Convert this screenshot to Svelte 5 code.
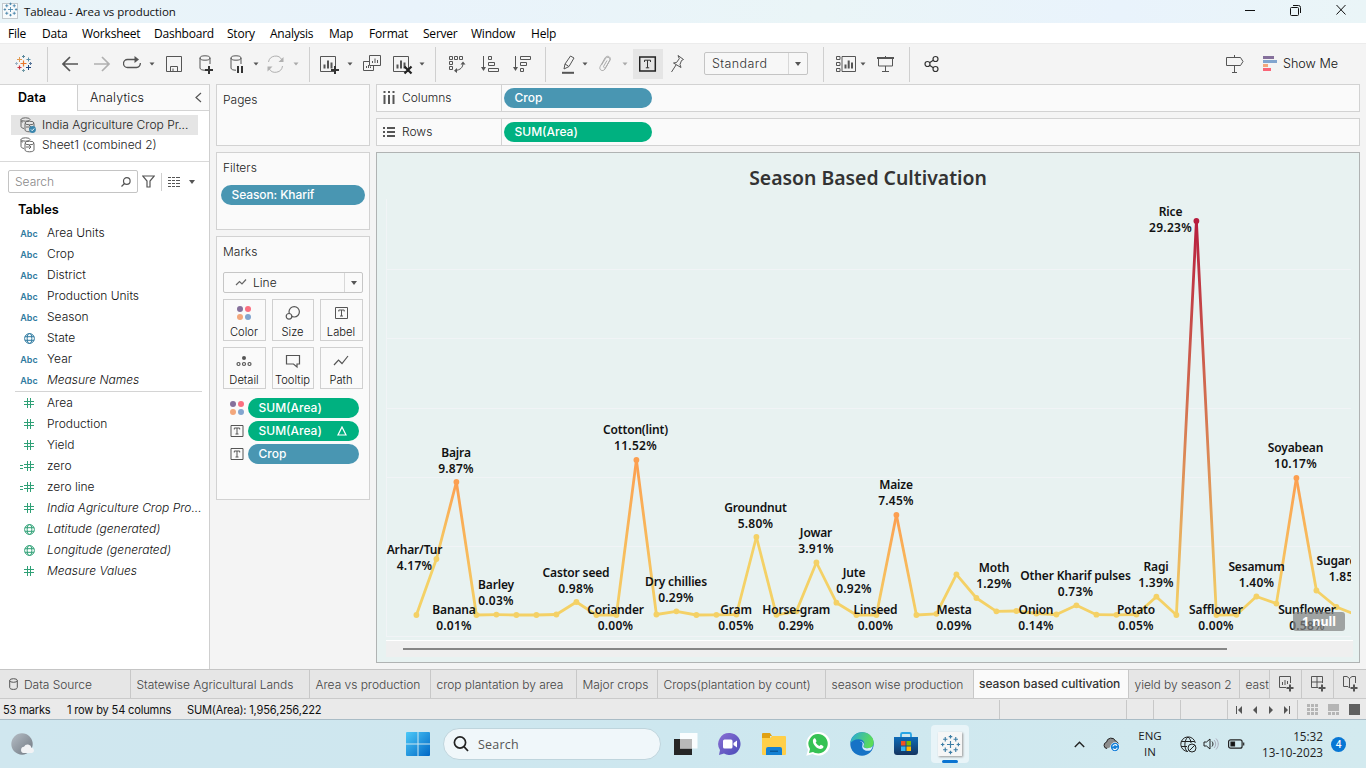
<script>
  const menus = [
    ['File', 34], ['Data', 40], ['Worksheet', 72], ['Dashboard', 73], ['Story', 43], ['Analysis', 59],
    ['Map', 40], ['Format', 54], ['Server', 48], ['Window', 60], ['Help', 40]
  ];

  const cross = (x, y, s, c, w = 1.2) =>
    `<path d="M${x - s} ${y}H${x + s}M${x} ${y - s}V${y + s}" stroke="${c}" stroke-width="${w}" fill="none"/>`;
  const plus = (x, y) => `<path d="M${x - 4} ${y}h8M${x} ${y - 4}v8" stroke="#333" stroke-width="2" fill="none"/>`;
  const barsBox = (x, y) =>
    `<path d="M${x} ${y}h15v15h-15z"/><path d="M${x + 4} ${y + 12}v-4M${x + 7.5} ${y + 12}v-8M${x + 11} ${y + 12}v-6" stroke-width="2"/>`;
  const db = '<ellipse cx="6" cy="6" rx="5" ry="2.2"/><path d="M1 6v10c0 1.4 2 2.2 5 2.2M11 6v6"/>';
  const caret = '<path d="M.5 10.5h5l-2.5 3z" fill="#555" stroke="none"/>';
  const boxT = '<path d="M.5.5h12v11H.5z"/><path d="M3.8 4.5V3h5.4v1.5M6.500 3v6M5 9h3" />';

  const icons = {
    logo:
      cross(8.500, 11.500, 3, '#e8762c', 1.2) + cross(4.500, 7.500, 2.500, '#e09a52', 1) + cross(13.5, 7.500, 2, '#5b8fa8', 1) +
      cross(4.500, 15.500, 2, '#c8333f', 1.2) + cross(13.5, 15.500, 2.500, '#1f457e', 1) +
      cross(8.500, 4.500, 1.500, '#5b879b', 1) + cross(8.500, 18.5, 1.500, '#7099a6', 1) + cross(1.500, 11.500, 1.500, '#9db3c4', 1) + cross(15.500, 11.500, 1.500, '#59779b', 1),
    back: '<path d="M16 12H1.500M8 5l-7 7 7 7" stroke-width="1.7"/>',
    forward: '<path d="M0 12h14.500M8 5l7 7-7 7" stroke-width="1.7" stroke="#b0b0b0"/>',
    loop: '<path d="M8 15.500H4.500a4 4 0 0 1 0-8H12M6 15.500h7.500a4 4 0 0 0 3.800-4.500" stroke-width="1.300"/><path d="M11.500 4v7L16 7.500z" fill="#555" stroke="none"/>',
    caret,
    caretOff: caret.replaceAll('#555', '#aaa'),
    save: '<path d="M.5 4.500h15v15H.5zM4.500 19.500v-5h7v5M7 19v-2.500" />',
    dbPlus: db + plus(10, 18),
    dbPause: db + '<path d="M8 14v7M12 14v7" stroke="#333" stroke-width="2"/>',
    refresh: '<g stroke="#b0b0b0"><path d="M1.500 10A7.200 7.200 0 0 1 15 8M15.500 14A7.200 7.200 0 0 1 2 16.500"/><path d="M16.500 5v5h-5z M.5 19.500v-5h5z" fill="#b0b0b0" stroke="none"/></g>',
    newSheet: barsBox(.5, 4.500) + plus(15, 18),
    duplicate: '<path d="M6.500 3.500h11v10h-11zM6 9.500H.5v9h10V14"/><path d="M9.500 11V9M12 11V6.500M14.500 11V8M3.500 16v-2M5.500 16v-3M7.500 16v-1.500" />',
    clearSheet: barsBox(.5, 4.500) + '<path d="M11.500 14.500l7 7m0-7l-7 7" stroke="#222" stroke-width="2.200"/>',
    swap: '<path d="M1.500 4.500h3v3h-3zM6.500 4.500h3v3h-3zM11.500 4.500h3v3h-3zM1.500 9.500h3v3h-3zM1.500 14.500h3v3h-3z"/><path d="M15 11c0 4.500-2.500 7-8 7.500"/><path d="M12.500 12.500l2.500-3 2.500 3zM9 16l-3 2.700 3 2.300z" fill="#555" stroke="none"/>',
    sortAsc: '<path d="M2.500 4v13M7.500 4.500h3v3h-3zM7.500 10.500h6v3h-6zM7.500 16.500h10v3h-10z"/><path d="M0 15h5l-2.500 4z" fill="#555" stroke="none"/>',
    sortDesc: '<path d="M2.500 4v13M7.500 4.500h10v3h-10zM7.500 10.500h6v3h-6zM7.500 16.500h3v3h-3z"/><path d="M0 15h5l-2.500 4z" fill="#555" stroke="none"/>',
    pen: '<path d="M2 17l1-5 5.500-8 3.500 2-5 8.500zM3 12l3.500 2.200"/><path d="M0 20.800h12" stroke-width="2"/>',
    clip: '<path d="M3.500 13l4-6.500c2-2.500 5.500-.5 4.200 2L7 17c-2 3.200-6.500 1-4.800-2.500L7 6c2-3.500 6.500-1 5 2L8 15c-1 1.800-3 .5-2.300-.8L9 8.500" stroke="#aaa"/>',
    textBox: '<path d="M.7 5h15.600v14H.7z" stroke="#222" stroke-width="1.500"/><path d="M5.500 10V8.200h6V10M8.500 8.200v7.600M6.800 15.800h3.400" stroke="#333"/>',
    pin: '<path d="M7 3.500l5.500 4-2 1-1.500 4 1 3-7.500-4.500 3-.5 2.800-3.800zM5 13l-4.500 7"/>',
    cards: '<path d="M.5 4.500h3.500v3H.5zM.5 10.500h3.500v3H.5zM.5 16.500h3.500v3H.5zM6 4.500h13.500v15H6z"/><path d="M9.500 16.500v-4M12.700 16.500v-8M16 16.500v-6" stroke-width="2"/>',
    present: '<path d="M0 6h17" stroke-width="2"/><path d="M8.500 4v2M1.500 6v8h14V6M8.500 14v5M5 19.500h7"/>',
    share: '<g stroke="#333" stroke-width="1.200"><circle cx="3.500" cy="12" r="2.500"/><circle cx="11.500" cy="7" r="2.500"/><circle cx="11.500" cy="17" r="2.500"/><path d="M5.500 10.700l3.800-2.500M5.500 13.300l3.800 2.500"/></g>',
    sign: '<path d="M.5 5.500h14l2.500 4-2.500 4H.5zM8.500 3v2M8.500 14v6M6 20.500h5"/>',
    showMe: '<g stroke="none"><path fill="#85709b" d="M0 4h11v3H0z"/><path fill="#82a5cf" d="M0 8h14v3H0z"/><path fill="#f3a77c" d="M0 12h5v3H0z"/><path fill="#fa6577" d="M0 16h8v3H0z"/></g>'
  };

  // icon name, left edge, width; "|" is a group separator
  const toolSpec = [
    ['logo', 15, 18], ['|', 47, 1], ['back', 62, 17], ['forward', 94, 17], ['loop', 123, 19], ['caret', 149, 6],
    ['save', 166, 16], ['dbPlus', 199, 15], ['dbPause', 230, 14], ['caret', 253, 6], ['refresh', 267, 17], ['caretOff', 293, 6],
    ['|', 309, 1], ['newSheet', 320, 20], ['caret', 347, 6], ['duplicate', 363, 18], ['clearSheet', 393, 20], ['caret', 419, 6],
    ['|', 435, 1], ['swap', 448, 18], ['sortAsc', 481, 18], ['sortDesc', 513, 18], ['|', 545, 1],
    ['pen', 562, 14], ['caret', 582, 6], ['clip', 598, 14], ['caretOff', 622, 6], ['textBox', 633, 30], ['pin', 671, 14],
    ['select', 704, 104], ['|', 823, 1], ['cards', 836, 20], ['caret', 860, 6], ['present', 877, 17], ['|', 909, 1], ['share', 924, 15]
  ];
  const tools = toolSpec.map(([name, x, w], i) => {
    const prev = toolSpec[i - 1];
    return { name, w, gap: prev ? x - prev[1] - prev[2] : x };
  });

  const dims = [
    ['abc', 'Area Units'], ['abc', 'Crop'], ['abc', 'District'], ['abc', 'Production Units'], ['abc', 'Season'],
    ['globe', 'State'], ['abc', 'Year'], ['abc', 'Measure Names', true]
  ];
  const measures = [
    ['hash', 'Area'], ['hash', 'Production'], ['hash', 'Yield'], ['calc', 'zero'], ['calc', 'zero line'],
    ['hash', 'India Agriculture Crop Pro...', true], ['globe', 'Latitude (generated)', true],
    ['globe', 'Longitude (generated)', true], ['hash', 'Measure Values', true]
  ];
  const markButtons = ['Color', 'Size', 'Label', 'Detail', 'Tooltip', 'Path'];

  // chart geometry, in the coordinates of the window
  const ys = [
    615, 559, 482, 615, 614.6, 615, 615, 614.5, 602, 615, 615, 460, 614.5, 611.3, 615, 614.8, 614.5, 537, 614.8, 611.3,
    562.5, 602.7, 615, 615, 515, 615, 613.8, 574.3, 598, 611.3, 611, 613.5, 614.5, 605.3, 614.7, 614.8, 614.5, 596.7,
    615, 221, 615, 614.8, 596.5, 603.6, 478, 590.5, 607, 615
  ];
  const tone = (y) => (y < 300 ? '#b71d3e' : y < 530 ? '#fc9f50' : '#f4d166');
  const points = ys.map((y, i) => ({ x: 30.4 + i * 20, y: y - 199, c: tone(y) }));
  const segments = points.slice(1).map((p, i) => ({ a: points[i], b: p, id: 'seg' + i }));
  const labels = [
    ['Arhar/Tur', '4.17%', 414.5, 554], ['Bajra', '9.87%', 456, 457], ['Banana', '0.01%', 454, 614],
    ['Barley', '0.03%', 496, 589], ['Castor seed', '0.98%', 576, 577], ['Coriander', '0.00%', 615.5, 614],
    ['Cotton(lint)', '11.52%', 635.5, 434], ['Dry chillies', '0.29%', 676, 586], ['Gram', '0.05%', 736, 614],
    ['Groundnut', '5.80%', 755.5, 512], ['Horse-gram', '0.29%', 796.3, 614], ['Jowar', '3.91%', 816, 537],
    ['Jute', '0.92%', 854, 577], ['Linseed', '0.00%', 875.5, 614], ['Maize', '7.45%', 896, 489],
    ['Mesta', '0.09%', 954, 614], ['Moth', '1.29%', 994, 572], ['Onion', '0.14%', 1036, 614],
    ['Other Kharif pulses', '0.73%', 1075.5, 580], ['Potato', '0.05%', 1136, 614], ['Ragi', '1.39%', 1156, 571],
    ['Rice', '29.23%', 1170.5, 216], ['Safflower', '0.00%', 1216, 614], ['Sesamum', '1.40%', 1256.5, 571],
    ['Soyabean', '10.17%', 1295.5, 452], ['Sugarcane', '1.85%', 1346.5, 565], ['Sunflower', '0.58%', 1307, 614]
  ];

  const sheets = [
    ['Statewise Agricultural Lands', 179], ['Area vs production', 121], ['crop plantation by area', 146], ['Major crops', 81],
    ['Crops(plantation by count)', 168], ['season wise production', 148], ['season based cultivation', 155],
    ['yield by season 2', 111], ['east', 30]
  ];
</script>

{#snippet globe()}
  <svg class="gl" width="11" height="11" viewBox="0 0 11 11" fill="none" stroke="currentColor">
    <circle cx="5.5" cy="5.500" r="4.900" /><ellipse cx="5.500" cy="5.500" rx="2.300" ry="4.900" /><path d="M1 3.700h9M1 7.300h9" />
  </svg>
{/snippet}

{#snippet field(kind, name, italic)}
  <div class="field">
    <span class="kind">
      {#if kind === 'abc'}Abc{:else if kind === 'globe'}{@render globe()}{:else}
        {#if kind === 'calc'}<svg class="eq" width="3" height="5" viewBox="0 0 3 5" stroke="currentColor"><path d="M0 1.500h3M0 4.500h3" /></svg>{/if}<svg width="10" height="10" viewBox="0 0 10 10" fill="none" stroke="currentColor" stroke-width="1"><path d="M0 3.500h10M0 6.500h10M3.500 0v10M6.500 0v10" /></svg>
      {/if}
    </span>
    <span class:italic>{name}</span>
  </div>
{/snippet}

{#snippet dots()}
  <svg width="14" height="14" viewBox="0 0 14 14"><circle cx="3" cy="3" r="3" fill="#85709b" /><circle cx="11" cy="3" r="3" fill="#fa6f80" /><circle cx="3" cy="11" r="3" fill="#f3a77c" /><circle cx="11" cy="11" r="3" fill="#82a5cf" /></svg>
{/snippet}

{#snippet tbox()}
  <svg width="13" height="12" viewBox="0 0 13 12" fill="none" stroke="#555">{@html boxT}</svg>
{/snippet}

{#snippet source(active)}
  <svg width="16" height="16" viewBox="0 0 16 16" fill="none" stroke="#666">
    <ellipse cx="5.500" cy="2.500" rx="4.500" ry="1.700" /><path d="M1 2.500v7c0 1 1.500 1.700 3 2M3 5c-1 0-2-.5-2-1" />
    <path d="M5 6.500v6.500c0 1 2 1.800 4.500 1.800S14 14 14 13V6.500" /><ellipse cx="9.500" cy="6" rx="4.500" ry="1.800" /><path d="M6 10h5M9 8l2 2-2 2" />
    {#if active}<circle cx="12.500" cy="12.500" r="3.400" fill="#3a86ad" stroke="none" /><path d="M11 12.500l1.200 1.200 2-2.200" stroke="#fff" />{/if}
  </svg>
{/snippet}

{#snippet flakes(s)}
  <svg width={s} height={s} viewBox="0 0 24 24">
    <g stroke="#3d7ea6" stroke-width="1.300" fill="none">
      <path d="M12 8v8M8 12h8M6 3.500v5M3.500 6h5M18 3.500v5M15.500 6h5M6 15.500v5M3.500 18h5M18 15.500v5M15.500 18h5M12 1v4M10 3h4M12 19v4M10 21h4M1 12h4M3 10v4M19 12h4M21 10v4" />
    </g>
  </svg>
{/snippet}

<div class="screen">
  <header class="title">
    <span class="appicon">{@render flakes(15)}</span>
    <span class="tt">Tableau - Area vs production</span>
    <svg width="106" height="14" viewBox="0 0 106 14" fill="none" stroke="#111">
      <path d="M0 7.500h10" /><path d="M45.500 5.500a1 1 0 0 1 1-1h6a1 1 0 0 1 1 1v6a1 1 0 0 1-1 1h-6a1 1 0 0 1-1-1zM48 2.500h5.500a2 2 0 0 1 2 2V10" /><path d="M91.500 2l9 9.500m0-9.500l-9 9.500" />
    </svg>
  </header>
  <nav class="menu">
    {#each menus as [m, w]}<span style="width:{w}px">{m}</span>{/each}
  </nav>

  <div class="toolbar">
    {#each tools as t}
      {#if t.name === '|'}
        <i class="sep" style="margin-left:{t.gap}px"></i>
      {:else if t.name === 'select'}
        <div class="select" style="margin-left:{t.gap}px"><span>Standard</span><b></b></div>
      {:else}
        <span class="tool" class:on={t.name === 'textBox'} style="margin-left:{t.gap}px;width:{t.w}px">
          <svg width={t.name === 'textBox' ? 18 : t.w} height="24" fill="none" stroke="#555">{@html icons[t.name]}</svg>
        </span>
      {/if}
    {/each}
    <div class="showme">
      <svg width="18" height="24" fill="none" stroke="#555">{@html icons.sign}</svg>
      <svg width="14" height="24">{@html icons.showMe}</svg>
      <span>Show Me</span>
    </div>
  </div>

  <main>
    <aside>
      <div class="tabs2"><b>Data</b><span>Analytics</span><svg width="7" height="12" viewBox="0 0 7 12" fill="none" stroke="#555" stroke-width="1.200"><path d="M6 1L1 5.500 6 10" /></svg></div>
      <div class="sources">
        <div class="src active">{@render source(true)}<span>India Agriculture Crop Pr...</span></div>
        <div class="src">{@render source(false)}<span>Sheet1 (combined 2)</span></div>
      </div>
      <div class="find">
        <div class="input"><span>Search</span><svg width="10" height="10" viewBox="0 0 10 10" fill="none" stroke="#555" stroke-width="1.200"><circle cx="5.800" cy="4" r="3.300" /><path d="M3.500 6.500L.5 9.500" /></svg></div>
        <svg width="13" height="13" viewBox="0 0 13 13" fill="none" stroke="#555" stroke-width="1.200"><path d="M.7 1h11.600L8 6v6H5V6z" /></svg>
        <i></i>
        <svg width="12" height="10" viewBox="0 0 12 10" stroke="#555"><path d="M0 .5h3M4 .5h3M8 .5h4M0 3.500h3M4 3.500h3M8 3.500h4M0 6.500h3M4 6.500h3M8 6.500h4M0 9.500h3M4 9.500h3M8 9.500h4" /></svg>
        <b class="down"></b>
      </div>
      <h2>Tables</h2>
      <div class="dims">{#each dims as [k, n, it]}{@render field(k, n, it)}{/each}</div>
      <div class="meas">{#each measures as [k, n, it]}{@render field(k, n, it)}{/each}</div>
    </aside>

    <section class="cards">
      <div class="card pages"><h3>Pages</h3></div>
      <div class="card filters"><h3>Filters</h3><div class="pill blue">Season: Kharif</div></div>
      <div class="card marks">
        <h3>Marks</h3>
        <div class="type">
          <svg width="13" height="9" viewBox="0 0 13 9" fill="none" stroke="#666" stroke-width="1.200"><path d="M1 7l3.500-3.500L7 6l4-4.500" /></svg>
          <span>Line</span><b></b>
        </div>
        <div class="btns">
          {#each markButtons as b}
            <div class="btn">
              <span class="ic">
                {#if b === 'Color'}{@render dots()}
                {:else if b === 'Label'}{@render tbox()}
                {:else}
                  <svg width="16" height="16" viewBox="0 0 16 16" fill="none" stroke="#555" stroke-width="1.200">
                    {#if b === 'Size'}<circle cx="9.200" cy="6.800" r="5.200" /><circle cx="4" cy="11.300" r="2.800" fill="#fafafa" />
                    {:else if b === 'Detail'}<circle cx="8" cy="5" r="2" fill="#555" stroke="none" /><circle cx="2.500" cy="11" r="1.500" /><circle cx="8" cy="11" r="1.500" /><circle cx="13.500" cy="11" r="1.500" />
                    {:else if b === 'Tooltip'}<path d="M1.500 2.500h13v8.500h-2.500V14L8.500 11h-7z" />
                    {:else}<path d="M1 12l4.500-5L9 10.500l6-7.500" />{/if}
                  </svg>
                {/if}
              </span>
              <span>{b}</span>
            </div>
          {/each}
        </div>
        <div class="enc">{@render dots()}<div class="pill green">SUM(Area)</div></div>
        <div class="enc">{@render tbox()}<div class="pill green">SUM(Area)<svg width="10" height="10" viewBox="0 0 10 10" fill="none" stroke="#fff" stroke-width="1.200"><path d="M5 1l4 8H1z" /></svg></div></div>
        <div class="enc">{@render tbox()}<div class="pill blue">Crop</div></div>
      </div>
    </section>

    <section class="work">
      <div class="shelf">
        <div class="name"><svg width="11" height="13" viewBox="0 0 11 13" stroke="#555" stroke-width="2"><path d="M1 0v2M5.500 0v2M10 0v2M1 4v9M5.500 4v9M10 4v9" /></svg><span>Columns</span></div>
        <div class="pill blue">Crop</div>
      </div>
      <div class="shelf">
        <div class="name"><svg width="12" height="10" viewBox="0 0 12 10" stroke="#555" stroke-width="2"><path d="M0 1h2M0 5h2M0 9h2M4 1h8M4 5h8M4 9h8" /></svg><span>Rows</span></div>
        <div class="pill green">SUM(Area)</div>
      </div>
      <div class="view">
        <h1>Season Based Cultivation</h1>
        <div class="plot">
          <svg width="965" height="441">
            <defs>
              {#each segments as s}
                <linearGradient id={s.id} gradientUnits="userSpaceOnUse" x1={s.a.x} y1={s.a.y} x2={s.b.x} y2={s.b.y + 0.01}>
                  <stop offset="0" stop-color={s.a.c} /><stop offset="1" stop-color={s.b.c} />
                </linearGradient>
              {/each}
            </defs>
            <path class="grid" d="M.5 0V438M0 70.500h966M0 139.500h966M0 209.500h966M0 278.500h966M0 347.500h966M0 437.500h966" />
            {#each segments as s}
              <path d="M{s.a.x} {s.a.y}L{s.b.x} {s.b.y}" stroke="url(#{s.id})" stroke-width="2.800" stroke-linecap="round" />
            {/each}
            {#each points as p}<circle cx={p.x} cy={p.y} r="2.900" fill={p.c} />{/each}
            {#each labels as [n, v, x, y]}
              <text x={x - 386} y={y - 199}>{n}</text><text class="pct" x={x - 386} y={y - 183}>{v}</text>
            {/each}
          </svg>
          <span class="null">1 null</span>
        </div>
        <div class="scroll"><i></i></div>
      </div>
    </section>
  </main>

  <div class="sheets">
    <div class="sheet ds"><svg width="9" height="12" viewBox="0 0 9 12" fill="none" stroke="#555"><ellipse cx="4.500" cy="2.500" rx="3.800" ry="1.800" /><path d="M.7 2.500v7c0 1.200 1.600 1.900 3.800 1.900s3.800-.7 3.800-1.900v-7" /></svg>Data Source</div>
    {#each sheets as [n, w]}<div class="sheet" class:active={n === 'season based cultivation'} style="width:{w}px">{n}</div>{/each}
    <div class="add"><svg width="16" height="16" fill="none" stroke="#555"><path d="M8 11.500H1.500V.5h11V7M4.500 9V6M7 9V4M9.500 8V5" /><path d="M8.500 12h7M12 8.500v7" stroke-width="2" /></svg></div>
    <div class="add"><svg width="16" height="16" fill="none" stroke="#555"><path d="M8 11.500H1.500V.5h11V7M1.500 6h11M7 0v11" /><path d="M8.500 12h7M12 8.500v7" stroke-width="2" /></svg></div>
    <div class="add"><svg width="16" height="16" fill="none" stroke="#555"><path d="M7.500 12L6 10.500H1.500V.5H5l2.500 2L10 .5h3.500V7M7.500 2.500V12" /><path d="M8.500 12h7M12 8.500v7" stroke-width="2" /></svg></div>
  </div>

  <div class="status">
    <span class="s1">53 marks</span><span class="s2">1 row by 54 columns</span><span class="s3">SUM(Area): 1,956,256,222</span>
    <i class="c1"></i><i class="c2"></i><i class="c3"></i><i class="c4"></i>
    <div class="nav"><svg width="54" height="8" viewBox="0 0 54 8" fill="#555"><path d="M0 0h1v8H0zM6 0v8L2 4zM21 0v8l-4-4zM33 0v8l4-4zM48 0v8l4-4zM53 0h1v8h-1z" /></svg></div>
    <svg class="modes" width="53" height="11" viewBox="0 0 53 11" fill="#b5b5b5"><path d="M0 0h3v3H0zM4 0h3v3H4zM8 0h3v3H8zM0 4h3v3H0zM4 4h3v3H4zM8 4h3v3H8zM0 8h3v3H0zM4 8h3v3H4zM8 8h3v3H8zM21 0h11v7H21zM21 8h3v3h-3zM25 8h3v3h-3zM29 8h3v3h-3z" /><path d="M42 0h11v11H42z" fill="#606060" /></svg>
  </div>

  <footer>
    <svg class="weather" width="24" height="24" viewBox="0 0 24 24"><defs><linearGradient id="moon" x2="1" y2="1"><stop stop-color="#b6bec6" /><stop offset="1" stop-color="#6f7780" /></linearGradient></defs><circle cx="11" cy="12" r="10.700" fill="url(#moon)" /><path d="M12.500 21a3.200 3.200 0 0 1 .5-6.300 4 4 0 0 1 7.500 1 2.700 2.700 0 0 1 .5 5.300z" fill="#f2f3f5" /></svg>
    <svg class="win" width="24" height="24" viewBox="0 0 24 24"><defs><linearGradient id="wg" x2="1" y2="1"><stop stop-color="#4cc9f8" /><stop offset="1" stop-color="#0067c5" /></linearGradient></defs><path d="M0 1a1 1 0 0 1 1-1h10.500v11.500H0zM12.500 0H23a1 1 0 0 1 1 1v10.500H12.500zM0 12.500h11.500V24H1a1 1 0 0 1-1-1zM12.500 12.500H24V23a1 1 0 0 1-1 1H12.500z" fill="url(#wg)" /></svg>
    <div class="search"><svg width="16" height="16" viewBox="0 0 16 16" fill="none" stroke="#222" stroke-width="1.700"><circle cx="7" cy="6.500" r="5.600" /><path d="M11 10.700l4 4.300" /></svg><span>Search</span></div>
    <div class="apps">
      <span><svg width="24" height="24" viewBox="0 0 24 24"><path d="M0 7h18v16H0z" fill="#262626" /><path d="M6 1h17.500v15.500H6z" fill="#fff" opacity=".9" /><path d="M6 7h12v9.500H6z" fill="#b9b9b9" /></svg></span>
      <span><svg width="24" height="24" viewBox="0 0 24 24"><defs><linearGradient id="ch" x2="1" y2="1"><stop stop-color="#8b70d4" /><stop offset="1" stop-color="#4a4bb8" /></linearGradient></defs><path d="M12 1a11 11 0 1 1-6 20.500L1 23l1-5A11 11 0 0 1 12 1z" fill="url(#ch)" /><rect x="5" y="7.500" width="9.500" height="9" rx="1.500" fill="#fff" /><path d="M15.500 11l3.500-2.500v7L15.500 13z" fill="#fff" /></svg></span>
      <span><svg width="24" height="24" viewBox="0 0 24 24"><path d="M0 2a1 1 0 0 1 1-1h7l2 3h-2v4H0z" fill="#e0a012" /><path d="M0 6h8l2-2h13a1 1 0 0 1 1 1v17a1 1 0 0 1-1 1H1a1 1 0 0 1-1-1z" fill="#ffcf48" /><path d="M4 23v-6a2 2 0 0 1 2-2h12a2 2 0 0 1 2 2v6z" fill="#1480d2" /><path d="M8 18.500h8v1.500H8z" fill="#075a9d" /></svg></span>
      <span><svg width="24" height="24" viewBox="0 0 24 24"><path d="M12 0a11.800 11.800 0 1 1-5.500 22L.3 23.700 2 17.800A11.800 11.800 0 0 1 12 0z" fill="#fff" /><path d="M12 2a9.700 9.700 0 1 1-5 18l-4 1 1-4A9.700 9.700 0 0 1 12 2z" fill="#36c254" /><path d="M8 6.500c.7-.5 1.300-.3 1.600.4l.9 2c.1.500-1 1.300-.8 1.700.7 1.500 2 2.700 3.600 3.300.5.100 1.200-1.300 1.700-1.100l2.200 1.100c.5.300.3 2-1 2.700-3.500 2-9.500-3.400-9.300-7.600 0-1 .5-2 1.100-2.500z" fill="#fff" /></svg></span>
      <span><svg width="24" height="24" viewBox="0 0 24 24"><defs><linearGradient id="eg" x2="1" y2=".3"><stop stop-color="#2aa8dc" /><stop offset="1" stop-color="#5bdc58" /></linearGradient></defs><circle cx="12" cy="12" r="11.700" fill="#1673c6" /><path d="M.5 11C1 4.500 6 .3 12 .3c7 0 11.700 5 11.700 10 0 4-3 6-6 6-3.500 0-4.500-1.500-4-2.500 2-3-.5-6.500-5-6.500-4 0-7 2-8.200 3.700z" fill="url(#eg)" /><path d="M13.500 13.800c-.5 1 .5 2.500 4 2.500 2 0 4-.8 5.300-2.200-.3 1.700-1 3-2 4.200-5 1.700-9.800-1-8.300-5.300.7-2.200-.6-3.600-2.800-4 2.500-.2 5.300 2.300 3.800 4.800z" fill="#d8eefa" /></svg></span>
      <span><svg width="24" height="24" viewBox="0 0 24 24"><defs><linearGradient id="st" x2="0" y2="1"><stop stop-color="#0d6cb9" /><stop offset="1" stop-color="#15345f" /></linearGradient></defs><path d="M7 6V2.500A1.500 1.500 0 0 1 8.500 1h7A1.500 1.500 0 0 1 17 2.500V6" fill="none" stroke="#28a5e5" stroke-width="1.800" /><path d="M0 5h24v15a3 3 0 0 1-3 3H3a3 3 0 0 1-3-3z" fill="url(#st)" /><path d="M7 9h4.500v4.500H7z" fill="#f25022" /><path d="M12.500 9H17v4.500h-4.500z" fill="#7fba00" /><path d="M7 14.500h4.500V19H7z" fill="#35b4f1" /><path d="M12.500 14.500H17V19h-4.500z" fill="#ffb900" /></svg></span>
      <span class="current"><em>{@render flakes(21)}</em></span>
    </div>
    <div class="tray">
      <svg class="chev" width="11" height="7" viewBox="0 0 11 7" fill="none" stroke="#222" stroke-width="1.400"><path d="M.8 6l4.700-4.800L10.200 6" /></svg>
      <svg class="cloud" width="17" height="15" viewBox="0 0 17 15"><path d="M4 11.500a3.200 3.200 0 0 1-.5-6.300A4.700 4.700 0 0 1 12.500 4c1.500.3 2.500 1.500 2.500 3" fill="#8d8d8d" stroke="#222" /><circle cx="12" cy="10" r="4.700" fill="#fff" /><circle cx="12" cy="10" r="4.200" fill="#1580d8" /><path d="M9.800 9.500a2.300 2.300 0 0 1 4.200-.8M14.200 10.700a2.300 2.300 0 0 1-4.200.8" stroke="#fff" stroke-width="1.100" fill="none" /></svg>
      <div class="lang">ENG<br />IN</div>
      <svg class="net" width="17" height="17" viewBox="0 0 17 17" fill="none" stroke="#222"><path d="M8 15.500A7.300 7.300 0 1 1 15.300 7M8 1C4 4 4 12 7 15.500M8 1c2 1.500 3 4 3 6M1.200 5.500h13.500M1.200 10.500H7" /><circle cx="12" cy="12" r="4" /><path d="M9.300 14.700l5.500-5.500" /></svg>
      <svg class="spk" width="17" height="14" viewBox="0 0 17 14" fill="none" stroke="#222"><path d="M1 5v4h2.500L7 12V2L3.500 5zM9 4.500c1.300 1.500 1.300 3.500 0 5" /><path d="M11 3c2.200 2.500 2.200 5.500 0 8M13 1.500c3 3.500 3 7.500 0 11" stroke="#aab" /></svg>
      <svg class="bat" width="17" height="10" viewBox="0 0 17 10" fill="none" stroke="#222" stroke-width="1.200"><rect x=".6" y=".8" width="13.500" height="8.400" rx="2" /><path d="M3 3h3.500v4H3z" fill="#111" /><path d="M15.700 3.500v3" /></svg>
      <div class="clock">15:32<br />13-10-2023</div>
      <div class="badge">4</div>
    </div>
  </footer>
</div>

<style>
  :global(body) { margin: 0; overflow: hidden; }
  * { box-sizing: border-box; }
  svg { display: block; flex: none; }
  .screen { width: 1366px; height: 768px; display: flex; flex-direction: column; font: 300 12px 'Inter', sans-serif; color: #333; background: #f4f4f4; overflow: hidden; white-space: nowrap; }
  h1, h2, h3 { margin: 0; }

  .title { height: 23px; display: flex; align-items: center; background: linear-gradient(90deg, #e9f4f8, #e9f3fb 30%, #eaf5f7 60%, #e9f3fc 82%, #eaf5f7); padding: 0 15px 0 2px; font-family: 'Open Sans', sans-serif; font-weight: 400; color: #111; }
  .appicon { width: 16px; height: 16px; border: 1px solid #c3c9cd; background: #f8fbfc; margin-right: 6px; display: grid; place-items: center; margin-top: -1px; }
  .tt { flex: 1; font-size: 11.5px; letter-spacing: -.06px; }
  .title svg:last-child { margin-top: -3px; }
  .menu { height: 20px; background: #fff; display: flex; align-items: center; padding-left: 8px; font: 400 12px 'Open Sans', sans-serif; color: #000; letter-spacing: -.22px; }

  .toolbar { height: 41px; display: flex; align-items: center; border-top: 1px solid #ececec; background: #f4f4f4; }
  .sep { width: 1px; height: 35px; background: #cfcfcf; flex: none; margin-top: 1px; }
  .tool { height: 30px; display: grid; place-items: center; flex: none; }
  .tool.on { background: #e5e5e5; }
  .select { width: 104px; height: 23px; border: 1px solid #c4c4c4; border-radius: 2px; background: #f7f7f7; display: flex; align-items: center; flex: none; margin-top: -1px; }
  .select span { flex: 1; padding-left: 7px; font-size: 12.5px; letter-spacing: .4px; color: #333; }
  .select b, .type b { width: 18px; height: 100%; border-left: 1px solid #d8d8d8; display: grid; place-items: center; }
  .select b { width: 19px; }
  .select b::after, .type b::after, .down { content: ''; border: 3.5px solid transparent; border-top: 4px solid #555; border-bottom: 0; }
  .showme { margin-left: auto; display: flex; align-items: center; width: 140px; font-size: 12.600px; color: #111; }
  .showme span { margin-top: -1px; }
  .showme svg + svg { margin: 0 6px 0 19px; }

  main { height: 585px; display: flex; }
  aside { width: 210px; background: #fff; border-right: 1px solid #cfcfcf; border-top: 1px solid #d4d4d4; }
  .tabs2 { height: 26px; display: flex; align-items: center; font-size: 12.5px; color: #111; }
  .tabs2 b { width: 77px; padding: 0 0 2px 18px; font-weight: 600; color: #000; }
  .tabs2 span { height: 26px; flex: 1; background: #fafafa; border-left: 1px solid #cfcfcf; border-bottom: 1px solid #d4d4d4; padding: 5px 0 0 12px; letter-spacing: .15px; }
  .tabs2 svg { margin: 0 0 0 -14px; width: 14px; padding-right: 7px; }
  .sources { height: 51px; padding: 4px 11px 0; border-bottom: 1px solid #d9d9d9; color: #222; }
  .src { height: 20px; display: flex; align-items: center; gap: 6px; padding: 0 0 1px 9px; }
  .active.src { background: #e5e5e5; }
  .find { height: 39px; display: flex; align-items: center; padding-left: 8px; }
  .input { width: 130px; height: 23px; border: 1px solid #c4c4c4; border-radius: 2px; display: flex; align-items: center; justify-content: space-between; padding: 0 6px; color: #888; margin-right: 4px; }
  .find i { width: 1px; height: 18px; background: #cfcfcf; margin: 0 6px; }
  .down { margin-left: 9px; }
  h2 { font-size: 12.800px; font-weight: 600; color: #000; line-height: 18px; margin-left: 18px; height: 21px; }
  .dims { border-bottom: 1px solid #d4d4d4; margin: 0 7px 0 15px; height: 170px; color: #2f7aa0; }
  .meas { margin: 0 7px 0 15px; color: #2fa076; }
  .field { height: 21px; display: flex; align-items: center; }
  .kind { width: 28px; height: 21px; font-size: 9px; font-weight: 600; flex: none; position: relative; display: flex; align-items: center; justify-content: center; margin: 1px 4px 0 0; }
  .eq { position: absolute; left: 5px; top: 8px; }
  .field > span:last-child { color: #111; }
  .field > .italic { font-style: italic; }

  .cards { width: 154px; margin-left: 6px; display: flex; flex-direction: column; gap: 6px; }
  .card { border: 1px solid #d2d2d2; background: #fafafa; }
  h3 { font: 300 12px 'Inter', sans-serif; color: #222; line-height: 15px; padding: 7px 0 0 6px; }
  .pages { height: 62px; } .filters { height: 78px; } .marks { height: 264px; }
  .pill { height: 20px; border-radius: 10px; color: #fff; font-size: 12px; font-weight: 500; line-height: 20px; padding-left: 10.5px; }
  .blue { background: #4996b2; } .green { background: #00b180; }
  .filters .pill { margin: 10px 4px 0; letter-spacing: -.1px; }
  .type { margin: 13px 6px 6px; height: 21px; border: 1px solid #c6c6c6; border-radius: 2px; display: flex; align-items: center; }
  .type svg { margin: 0 5px 0 11px; } .type span { flex: 1; color: #222; }
  .btns { display: grid; grid-template-columns: 43px 42px 43px; grid-auto-rows: 42px; gap: 6px; margin: 0 6px 9px; }
  .btn { border: 1px solid #d0d0d0; font-size: 11.2px; color: #111; display: flex; flex-direction: column; align-items: center; padding-right: 1px; }
  .btn > span:last-child { line-height: 14px; }
  .ic { height: 25px; display: grid; place-items: center; padding-top: 1px; }
  .enc { display: flex; align-items: center; padding-left: 13px; margin-bottom: 3px; }
  .enc > svg { width: 14px; }
  .enc .pill { width: 111px; margin-left: 4px; display: flex; align-items: center; justify-content: space-between; padding-right: 12px; }

  .work { width: 984px; margin-left: 6px; }
  .shelf { height: 28px; border: 1px solid #d2d2d2; background: #fafafa; display: flex; align-items: center; margin-bottom: 6px; }
  .name { width: 125px; height: 100%; border-right: 1px solid #d2d2d2; display: flex; align-items: center; padding: 0 0 1px 6px; gap: 7px; color: #222; }
  .name svg { width: 12px; }
  .shelf .pill { width: 148px; margin-left: 2px; }
  .view { height: 511px; border: 1px solid #b0b3b3; background: #e8f2f1; padding-left: 9px; }
  h1 { font: 600 19.400px/50px 'Noto Sans', sans-serif; height: 46px; text-align: center; color: #333; padding-right: 9px; }
  .plot { height: 441px; width: 966px; position: relative; overflow: hidden; }
  .grid { stroke: #f1f4f6; fill: none; }
  text { font: 600 12px 'Noto Sans', sans-serif; text-anchor: middle; letter-spacing: -.16px; fill: #111; }
  .pct { letter-spacing: .25px; }
  .null { position: absolute; left: 907px; top: 413px; width: 52px; height: 19px; border-radius: 3px; background: rgba(130, 132, 132, .72); color: #fff; font: 700 12.500px/19px 'Noto Sans', sans-serif; text-align: center; }
  .scroll { width: 967px; height: 17px; border-top: 1px solid #fff; background: #efefef; padding: 7px 0 0 17px; }
  .scroll i { display: block; width: 824px; height: 2px; background: #868686; }

  .sheets { height: 30px; display: flex; border-top: 1px solid #c5c5c5; border-bottom: 1px solid #cacaca; background: #e6e6e6; }
  .sheet, .add { border-right: 1px solid #c8c8c8; height: 28px; line-height: 29px; color: #444; padding-left: 5.500px; flex: none; overflow: hidden; letter-spacing: -.04px; }
  .sheet.active { background: #fafafa; color: #333; font-weight: 500; line-height: 27px; letter-spacing: -.06px; padding-left: 5px; }
  .sheet.ds { width: 131px; display: flex; align-items: center; gap: 6px; padding-left: 9px; }
  .add { width: 32px; display: grid; place-items: center; padding: 0; }
  .add:last-child { width: 33px; }
  .status { height: 21px; display: flex; align-items: center; background: #eaeaea; border-bottom: 1px solid #a9bcc6; font-size: 11.100px; font-weight: 400; color: #111; padding: 1px 0 0 3px; letter-spacing: -.18px; }
  .s1 { width: 64px; } .s2 { width: 120px; } .s3 { width: 812px; }
  .status i { height: 19px; border-left: 1px solid #c8c8c8; }
  .c1 { width: 127px; } .c2 { width: 27px; } .c3 { width: 27px; } .c4 { width: 47px; }
  .nav { width: 71px; height: 19px; border-left: 1px solid #c8c8c8; border-right: 1px solid #c8c8c8; display: grid; place-items: center; }
  .modes { margin-left: 9px; }

  footer { height: 48px; background: linear-gradient(90deg, #d0e7ef, #cde7ef 50%, #d3eaef); display: flex; align-items: center; font-family: 'Open Sans', sans-serif; font-weight: 400; color: #222; }
  .weather { margin-left: 11px; }
  .win { margin-left: 371px; }
  .search { width: 218px; height: 32px; border-radius: 16px; margin-left: 13px; background: #f0f7fa; border: 1px solid #bfd5dd; display: flex; align-items: center; gap: 9px; padding-left: 9px; font-size: 12.5px; color: #555; }
  .search span { letter-spacing: .2px; }
  .apps { display: flex; margin-left: 3px; }
  .apps span { width: 44px; height: 38px; display: grid; place-items: center; }
  .apps .current { width: 38px; margin-left: 3px; border-radius: 4px; background: #e8f4f8; position: relative; }
  .current em { width: 24px; height: 24px; background: #f6f6f6; box-shadow: 1px 1px 2px #999; display: grid; place-items: center; }
  .current::after { content: ''; position: absolute; left: 11px; bottom: 0; width: 16px; height: 3px; border-radius: 2px; background: #0a74d1; }
  .tray { margin-left: auto; display: flex; align-items: center; padding-right: 20px; font-size: 11.5px; line-height: 16px; }
  .cloud { margin-left: 18px; }
  .lang { width: 44px; margin-left: 8px; text-align: center; }
  .net { margin-left: 8px; } .spk { margin-left: 6px; } .bat { margin-left: 8px; }
  .clock { width: 78px; text-align: right; font-size: 11.700px; }
  .badge { width: 15px; height: 15px; border-radius: 50%; margin-left: 8px; background: #0877d4; color: #fff; font-size: 10px; font-weight: 600; line-height: 15px; text-align: center; }
</style>
